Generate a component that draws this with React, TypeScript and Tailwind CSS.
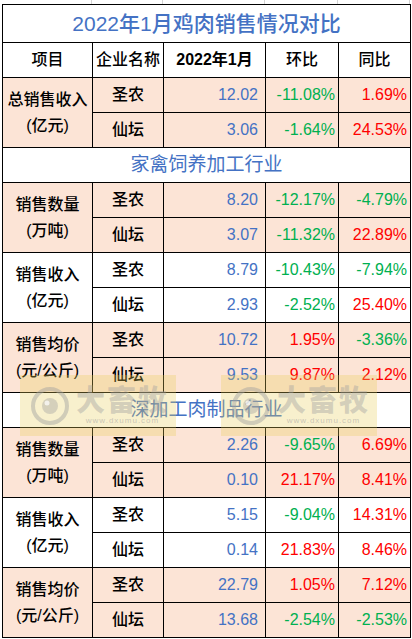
import React from "react";

type Row = { co: string; v: string; hb: string; tb: string };
type Group = { l1: string; l2: string; pink: boolean; rows: Row[] };

const g1: Group[] = [
  {
    l1: "总销售收入",
    l2: "(亿元)",
    pink: true,
    rows: [
      { co: "圣农", v: "12.02", hb: "-11.08%", tb: "1.69%" },
      { co: "仙坛", v: "3.06", hb: "-1.64%", tb: "24.53%" },
    ],
  },
];
const g2: Group[] = [
  {
    l1: "销售数量",
    l2: "(万吨)",
    pink: true,
    rows: [
      { co: "圣农", v: "8.20", hb: "-12.17%", tb: "-4.79%" },
      { co: "仙坛", v: "3.07", hb: "-11.32%", tb: "22.89%" },
    ],
  },
  {
    l1: "销售收入",
    l2: "(亿元)",
    pink: false,
    rows: [
      { co: "圣农", v: "8.79", hb: "-10.43%", tb: "-7.94%" },
      { co: "仙坛", v: "2.93", hb: "-2.52%", tb: "25.40%" },
    ],
  },
  {
    l1: "销售均价",
    l2: "(元/公斤)",
    pink: true,
    rows: [
      { co: "圣农", v: "10.72", hb: "1.95%", tb: "-3.36%" },
      { co: "仙坛", v: "9.53", hb: "9.87%", tb: "2.12%" },
    ],
  },
];
const g3: Group[] = [
  {
    l1: "销售数量",
    l2: "(万吨)",
    pink: true,
    rows: [
      { co: "圣农", v: "2.26", hb: "-9.65%", tb: "6.69%" },
      { co: "仙坛", v: "0.10", hb: "21.17%", tb: "8.41%" },
    ],
  },
  {
    l1: "销售收入",
    l2: "(亿元)",
    pink: false,
    rows: [
      { co: "圣农", v: "5.15", hb: "-9.04%", tb: "14.31%" },
      { co: "仙坛", v: "0.14", hb: "21.83%", tb: "8.46%" },
    ],
  },
  {
    l1: "销售均价",
    l2: "(元/公斤)",
    pink: true,
    rows: [
      { co: "圣农", v: "22.79", hb: "1.05%", tb: "7.12%" },
      { co: "仙坛", v: "13.68", hb: "-2.54%", tb: "-2.53%" },
    ],
  },
];

const pct = (s: string) =>
  s.startsWith("-") ? "text-[#00b050]" : "text-[#ff0000]";

function GroupRows({ g }: { g: Group }) {
  const bg = g.pink ? "bg-[#fce4d6]" : "bg-white";
  return (
    <>
      {g.rows.map((r, i) => (
        <tr key={i} className={`h-[35px] ${bg}`}>
          {i === 0 && (
            <td
              rowSpan={2}
              className="border border-black text-center text-[16px] font-medium leading-[26px] text-black"
            >
              <div>{g.l1}</div>
              <div>{g.l2}</div>
            </td>
          )}
          <td className="border border-black text-center text-[16px] font-medium text-black">
            {r.co}
          </td>
          <td className="border border-black pr-[7px] text-right text-[16px] text-[#4472c4]">
            {r.v}
          </td>
          <td className={`border border-black pr-[3px] text-right text-[16px] ${pct(r.hb)}`}>
            {r.hb}
          </td>
          <td className={`border border-black pr-[3px] text-right text-[16px] ${pct(r.tb)}`}>
            {r.tb}
          </td>
        </tr>
      ))}
    </>
  );
}

function Section({ t }: { t: string }) {
  return (
    <tr className="h-[35px] bg-white">
      <td
        colSpan={5}
        className="border border-black text-center text-[19px] text-[#4472c4]"
      >
        {t}
      </td>
    </tr>
  );
}

function Watermark({ left }: { left: string }) {
  return (
    <div
      className={`pointer-events-none absolute top-[375px] ${left} flex h-[61px] w-[156px] items-center gap-[6px] bg-[rgba(232,205,90,0.3)] pl-[10px]`}
    >
      <svg width="40" height="40" viewBox="0 0 40 40">
        <circle cx="20" cy="20" r="17" fill="none" stroke="rgba(160,160,160,0.45)" strokeWidth="4" />
        <circle cx="20" cy="20" r="8" fill="rgba(160,160,160,0.4)" />
        <circle cx="17" cy="17" r="2.5" fill="rgba(255,255,255,0.7)" />
      </svg>
      <div className="flex flex-col items-center">
        <div className="text-[29px] font-black leading-[30px] tracking-[2px] text-[rgba(160,160,160,0.42)]">
          大畜牧
        </div>
        <div className="text-[8px] leading-[10px] tracking-[1px] text-[rgba(160,160,160,0.55)]">
          www.dxumu.com
        </div>
      </div>
    </div>
  );
}

export default function App() {
  return (
    <div className="relative h-[639px] w-[412px] overflow-hidden bg-white font-['Liberation_Sans','Noto_Sans_CJK_SC',sans-serif]">
      <div className="flex h-[4px]">
        <div className="w-[92px] border-r border-[#d4d4d4]" />
        <div className="w-[71px] border-r border-[#d4d4d4]" />
        <div className="w-[102px] border-r border-[#d4d4d4]" />
        <div className="w-[73px] border-r border-[#d4d4d4]" />
        <div className="w-[72px] border-r border-[#d4d4d4]" />
      </div>
      <table className="ml-[2px] w-[409px] table-fixed border-collapse">
        <colgroup>
          <col className="w-[90px]" />
          <col className="w-[71px]" />
          <col className="w-[102px]" />
          <col className="w-[73px]" />
          <col className="w-[72px]" />
        </colgroup>
        <tbody>
          <tr className="h-[38px] bg-white">
            <td colSpan={5} className="border border-black text-center text-[21px] font-medium text-[#4472c4]">
              2022年1月鸡肉销售情况对比
            </td>
          </tr>
          <tr className="h-[35px] bg-white text-[16px] font-medium text-black">
            <td className="border border-black text-center">项目</td>
            <td className="border border-black text-center">企业名称</td>
            <td className="border border-black text-center font-bold">2022年1月</td>
            <td className="border border-black text-center">环比</td>
            <td className="border border-black text-center">同比</td>
          </tr>
          {g1.map((g, i) => (
            <GroupRows key={i} g={g} />
          ))}
          <Section t="家禽饲养加工行业" />
          {g2.map((g, i) => (
            <GroupRows key={i} g={g} />
          ))}
          <Section t="深加工肉制品行业" />
          {g3.map((g, i) => (
            <GroupRows key={i} g={g} />
          ))}
        </tbody>
      </table>
      <Watermark left="left-[20px]" />
      <Watermark left="left-[221px]" />
    </div>
  );
}
